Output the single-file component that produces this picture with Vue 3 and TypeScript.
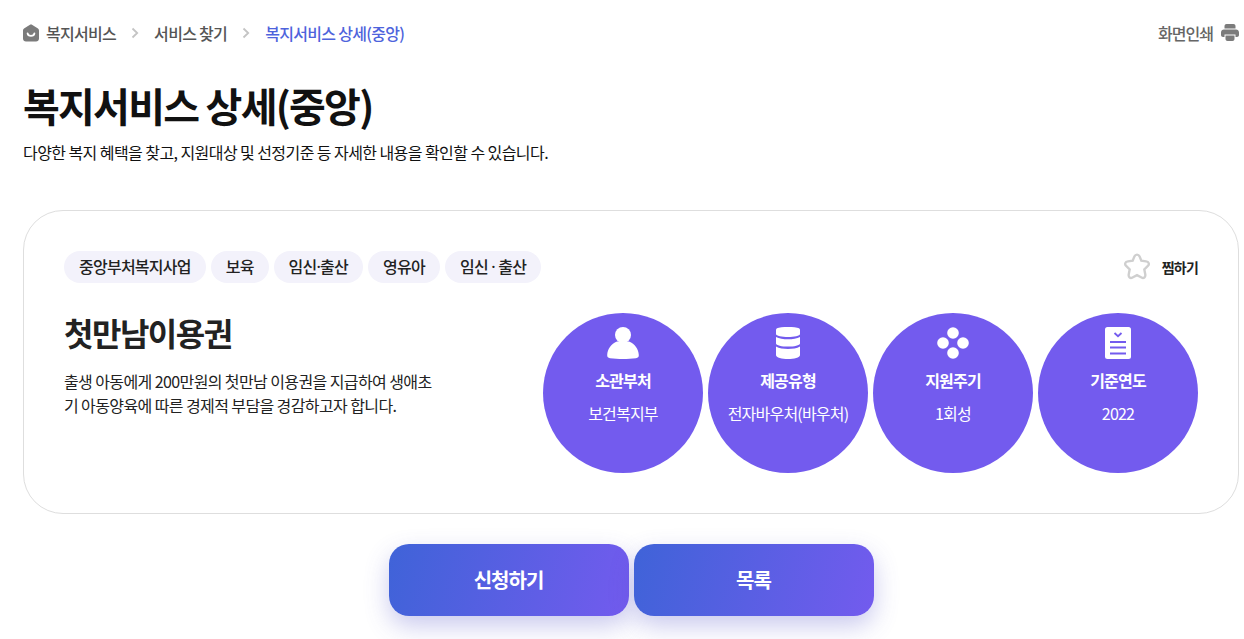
<script setup lang="ts">
type Info = {
  icon: string
  title: string
  value: string
}

const tags: string[] = ['중앙부처복지사업', '보육', '임신·출산', '영유아', '임신 · 출산']

const infos: Info[] = [
  { icon: 'user', title: '소관부처', value: '보건복지부' },
  { icon: 'db', title: '제공유형', value: '전자바우처(바우처)' },
  { icon: 'dots', title: '지원주기', value: '1회성' },
  { icon: 'doc', title: '기준연도', value: '2022' },
]
</script>

<template>
  <div class="page">
    <div class="topbar">
      <nav class="crumbs">
        <svg class="home" width="16" height="18" viewBox="0 0 16 18">
          <path d="M6.6 0.9 C7.5 0.3 8.5 0.3 9.4 0.9 L14.6 4.3 C15.5 4.9 16 5.7 16 6.8 V14.6 C16 16.4 14.7 17.6 13 17.6 H3 C1.3 17.6 0 16.4 0 14.6 V6.8 C0 5.7 0.5 4.9 1.4 4.3 Z" fill="#7b7b7b" />
          <path d="M4.6 9.4 C5 12.6 11 12.6 11.4 9.4" fill="none" stroke="#fff" stroke-width="1.8" stroke-linecap="round" />
        </svg>
        <span class="crumb">복지서비스</span>
        <svg class="chev" width="8" height="12" viewBox="0 0 8 12"><path d="M1.5 1.5 L6.2 6 L1.5 10.5" fill="none" stroke="#c4c4c4" stroke-width="1.8" /></svg>
        <span class="crumb">서비스 찾기</span>
        <svg class="chev" width="8" height="12" viewBox="0 0 8 12"><path d="M1.5 1.5 L6.2 6 L1.5 10.5" fill="none" stroke="#c4c4c4" stroke-width="1.8" /></svg>
        <span class="crumb current">복지서비스 상세(중앙)</span>
      </nav>
      <div class="print">
        <span>화면인쇄</span>
        <svg width="18" height="17" viewBox="0 0 18 17">
          <path d="M5.5 0 H12.5 C13.6 0 14.5 0.9 14.5 2 V4.4 H3.5 V2 C3.5 0.9 4.4 0 5.5 0 Z" fill="#7b7b7b" />
          <path d="M3 5.4 H15 C16.7 5.4 18 6.7 18 8.4 V11 C18 12.1 17.1 13 16 13 H14.5 V10.5 H3.5 V13 H2 C0.9 13 0 12.1 0 11 V8.4 C0 6.7 1.3 5.4 3 5.4 Z" fill="#7b7b7b" />
          <path d="M4.5 11.5 H13.5 V15 C13.5 16.1 12.6 17 11.5 17 H6.5 C5.4 17 4.5 16.1 4.5 15 Z" fill="#7b7b7b" />
        </svg>
      </div>
    </div>

    <h1 class="title">복지서비스 상세(중앙)</h1>
    <p class="desc">다양한 복지 혜택을 찾고, 지원대상 및 선정기준 등 자세한 내용을 확인할 수 있습니다.</p>

    <section class="card">
      <div class="card-top">
        <ul class="tags">
          <li v-for="tag in tags" :key="tag" class="tag">{{ tag }}</li>
        </ul>
        <button class="fav" type="button">
          <svg width="28" height="28" viewBox="1 1 26 26">
            <path d="M14 2.5 C15.2 2.5 16 3.3 16.5 4.4 L18 8.2 L22.4 8.8 C25 9.2 25.8 11.4 24.1 13 L20.8 16.2 L21.7 21 C22.1 23.5 20.2 24.8 18.2 23.8 L14 21.6 L9.8 23.8 C7.8 24.8 5.9 23.5 6.3 21 L7.2 16.2 L3.9 13 C2.2 11.4 3 9.2 5.6 8.8 L10 8.2 L11.5 4.4 C12 3.3 12.8 2.5 14 2.5 Z" fill="none" stroke="#cfcfcf" stroke-width="2.2" />
          </svg>
          <span>찜하기</span>
        </button>
      </div>

      <div class="card-body">
        <div class="summary">
          <h2 class="name">첫만남이용권</h2>
          <p class="text">출생 아동에게 200만원의 첫만남 이용권을 지급하여 생애초기 아동양육에 따른 경제적 부담을 경감하고자 합니다.</p>
        </div>
        <div class="circles">
          <div v-for="info in infos" :key="info.title" class="circle">
            <svg class="icon" width="32" height="32" viewBox="0 0 32 32">
              <template v-if="info.icon === 'user'">
                <circle cx="16" cy="8" r="8" fill="#fff" />
                <path d="M10 14.5 C4 17 0.5 22 0.2 28 C0.1 30 1 30.8 3 31.2 C11 32.2 21 32.2 29 31.2 C31 30.8 31.9 30 31.8 28 C31.5 22 28 17 22 14.5 Z" fill="#fff" />
              </template>
              <template v-else-if="info.icon === 'db'">
                <path d="M5 1.3 C8.5 -0.3 23.5 -0.3 27 1.3 C27.7 1.7 28 2.3 28 2.8 V7 C28 9 22 10 16 10 C10 10 4 9 4 7 V2.8 C4 2.3 4.3 1.7 5 1.3 Z" fill="#fff" />
                <path d="M4 10 C7 11.8 11.5 12.3 16 12.3 C20.5 12.3 25 11.8 28 10 V16.5 C28 18.5 22 19.6 16 19.6 C10 19.6 4 18.5 4 16.5 Z" fill="#fff" />
                <path d="M4 19.6 C7 21.4 11.5 22 16 22 C20.5 22 25 21.4 28 19.6 V28 C28 30.6 22 32 16 32 C10 32 4 30.6 4 28 Z" fill="#fff" />
              </template>
              <template v-else-if="info.icon === 'dots'">
                <circle cx="16" cy="6" r="5.8" fill="#fff" />
                <circle cx="6" cy="16" r="5.8" fill="#fff" />
                <circle cx="26" cy="16" r="5.8" fill="#fff" />
                <circle cx="16" cy="26" r="5.8" fill="#fff" />
              </template>
              <template v-else>
                <rect x="3" y="0" width="26" height="32" rx="2.5" fill="#fff" />
                <path d="M12.5 6 L16 9.2 L19.5 6" fill="none" stroke="#735bee" stroke-width="1.8" />
                <path d="M8 15 H24 M8 20.5 H24 M8 26.5 H24" fill="none" stroke="#735bee" stroke-width="2" />
              </template>
            </svg>
            <strong class="circle-title">{{ info.title }}</strong>
            <span class="circle-value">{{ info.value }}</span>
          </div>
        </div>
      </div>
    </section>

    <div class="actions">
      <button class="btn" type="button">신청하기</button>
      <button class="btn" type="button">목록</button>
    </div>
  </div>
</template>

<style>
html,
body {
  margin: 0;
  background: #fff;
}
</style>

<style scoped>
.page {
  padding: 0 5px 0 23px;
  font-family: 'Noto Sans CJK KR', 'Noto Sans', sans-serif;
  color: #111;
  height: 639px;
  box-sizing: border-box;
  overflow: hidden;
}

.topbar {
  display: flex;
  justify-content: space-between;
  align-items: center;
  height: 65px;
}

.crumbs {
  display: flex;
  align-items: center;
  font-size: 16px;
  letter-spacing: -0.7px;
  color: #555;
  font-weight: 500;
}

.home {
  margin-right: 7px;
}

.chev {
  margin: 0 15px;
}

.current {
  color: #4e63dc;
}

.print {
  display: flex;
  align-items: center;
  gap: 8px;
  font-size: 16px;
  letter-spacing: -0.95px;
  color: #666;
  font-weight: 500;
}

.title {
  margin: 12px 0 0;
  font-size: 40px;
  line-height: 56px;
  font-weight: 700;
  letter-spacing: -1.75px;
  color: #111;
}

.desc {
  margin: 7px 0 0;
  font-size: 16px;
  line-height: 24px;
  letter-spacing: -0.57px;
  color: #111;
}

.card {
  margin-top: 46px;
  box-sizing: border-box;
  height: 304px;
  padding: 40px;
  border: 1px solid #dedede;
  border-radius: 40px;
}

.card-top {
  display: flex;
  justify-content: space-between;
  align-items: center;
}

.tags {
  display: flex;
  gap: 5px;
  margin: 0;
  padding: 0;
  list-style: none;
}

.tag {
  height: 32px;
  padding: 0 15px;
  border-radius: 16px;
  background: #f3f2fb;
  font-family: 'Noto Sans', 'Noto Sans CJK KR', sans-serif;
  font-size: 16px;
  line-height: 32px;
  letter-spacing: -0.76px;
  font-weight: 500;
  color: #222;
}

.fav {
  display: flex;
  align-items: center;
  gap: 11px;
  padding: 0;
  border: 0;
  background: none;
  font-family: inherit;
  font-size: 14px;
  font-weight: 700;
  letter-spacing: -0.8px;
  color: #222;
}

.card-body {
  display: flex;
  justify-content: space-between;
  margin-top: 30px;
}

.summary {
  width: 368px;
}

.name {
  margin: 0;
  font-size: 32px;
  line-height: 38px;
  font-weight: 700;
  letter-spacing: -1.5px;
  color: #222;
}

.text {
  margin: 18px 0 0;
  font-size: 16px;
  line-height: 24px;
  letter-spacing: -0.6px;
  color: #222;
  word-break: break-all;
}

.circles {
  display: flex;
  gap: 5px;
}

.circle {
  display: flex;
  flex-direction: column;
  align-items: center;
  width: 160px;
  height: 160px;
  border-radius: 50%;
  background: #735bee;
  color: #fff;
}

.icon {
  margin-top: 14px;
}

.circle-title {
  margin-top: 9px;
  font-size: 16px;
  line-height: 24px;
  font-weight: 700;
  letter-spacing: -0.8px;
}

.circle-value {
  margin-top: 9px;
  font-size: 16px;
  line-height: 24px;
  letter-spacing: -0.8px;
}

.actions {
  display: flex;
  justify-content: center;
  gap: 5px;
  margin-top: 30px;
}

.btn {
  width: 240px;
  height: 72px;
  padding: 0 0 2px;
  border: 0;
  border-radius: 20px;
  background: linear-gradient(105deg, #3f63d8 0%, #735bee 100%);
  box-shadow: 0 10px 25px rgba(80, 80, 200, 0.3);
  font-family: inherit;
  font-size: 20px;
  font-weight: 700;
  letter-spacing: -1px;
  color: #fff;
}
</style>
